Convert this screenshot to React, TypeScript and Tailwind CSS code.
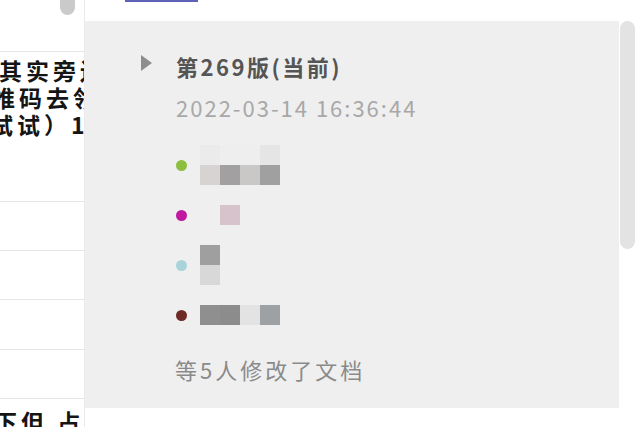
import React from 'react'

const FONT = { fontFamily: '"Noto Sans CJK SC", "Noto Sans", sans-serif' }

// pixelated (mosaic) editor names, 20px cells
const EDITORS: { dot: string; cells: string[][] }[] = [
  {
    dot: 'bg-[#8dbf3f]',
    cells: [
      ['bg-[#ebebeb]', 'bg-[#eeeeee]', 'bg-[#eeeeee]', 'bg-[#e5e5e5]'],
      ['bg-[#d7d3d3]', 'bg-[#a2a0a1]', 'bg-[#cac7c7]', 'bg-[#a0a0a0]'],
    ],
  },
  {
    dot: 'bg-[#c0189e]',
    cells: [['bg-[#efefef]', 'bg-[#d7c3cc]']],
  },
  {
    dot: 'bg-[#a9d3da]',
    cells: [['bg-[#9f9f9f]'], ['bg-[#d8d8d8]']],
  },
  {
    dot: 'bg-[#6e2b25]',
    cells: [['bg-[#8f8f8f]', 'bg-[#8c8c8c]', 'bg-[#e3e3e3]', 'bg-[#9ea1a4]']],
  },
]

function LeftPanel() {
  return (
    <div className="w-[85px] shrink-0 overflow-hidden bg-white border-r border-[#eaeaea]" style={FONT}>
      <div className="h-[52px] border-b border-[#e6e6e6]">
        <div className="ml-[60px] w-[15px] h-[15px] rounded-b-full bg-[#cacaca]" />
      </div>
      <div className="h-[150px] border-b border-[#e6e6e6] pt-[5px] text-[23px] leading-[27px] font-bold text-[#151515] tracking-[4px] whitespace-nowrap">
        <div className="ml-[-1px]">其实旁边</div>
        <div className="ml-[-8px]">推码去领取</div>
        <div className="ml-[-10px]">试试）1</div>
      </div>
      <div className="h-[49px] border-b border-[#e6e6e6]" />
      <div className="h-[49px] border-b border-[#e6e6e6]" />
      <div className="h-[50px] border-b border-[#e6e6e6]" />
      <div className="h-[49px] border-b border-[#e6e6e6]" />
      <div className="pt-[9px] text-[23px] leading-[27px] font-bold text-[#151515] tracking-[4px] whitespace-nowrap">
        <div className="ml-[-6px]">下但 占领</div>
      </div>
    </div>
  )
}

function EditorRow({ dot, cells }: { dot: string; cells: string[][] }) {
  return (
    <div className="flex items-center">
      <span className={`w-[11px] h-[11px] rounded-full ml-[91px] ${dot}`} />
      <div className="ml-[13px] flex flex-col">
        {cells.map((row, i) => (
          <div key={i} className="flex">
            {row.map((c, j) => (
              <span key={j} className={`w-[20px] h-[20px] ${c}`} />
            ))}
          </div>
        ))}
      </div>
    </div>
  )
}

function VersionCard() {
  return (
    <div className="w-[534px] h-[387px] bg-[#efefef] pt-[30px]" style={FONT}>
      <div className="flex items-start">
        <svg className="ml-[56px] mt-[4px]" width="12" height="16" viewBox="0 0 12 16">
          <polygon points="0,0 11,8 0,16" fill="#8d8d8d" />
        </svg>
        <div className="ml-[23px] text-[22px] leading-[30px] font-bold text-[#555555] tracking-[2.5px]">
          第269版(当前)
        </div>
      </div>
      <div className="ml-[91px] mt-[11px] text-[22px] leading-[30px] text-[#a8a8a8] tracking-[2px]">
        2022-03-14 16:36:44
      </div>

      <div className="mt-[23px] flex flex-col gap-[20px]">
        {EDITORS.map((e, i) => (
          <EditorRow key={i} dot={e.dot} cells={e.cells} />
        ))}
      </div>

      <div className="ml-[90px] mt-[29px] text-[22px] leading-[30px] text-[#8a8a8a] tracking-[3px]">
        等5人修改了文档
      </div>
    </div>
  )
}

export default function App() {
  return (
    <div className="flex w-[640px] h-[427px] bg-white overflow-hidden">
      <LeftPanel />
      <div className="flex-1 flex flex-col">
        <div className="h-[21px]">
          <div className="ml-[40px] w-[73px] h-[2px] bg-[#5d62b6]" />
        </div>
        <div className="flex">
          <VersionCard />
          <div className="w-[17px] pl-[1px]">
            <div className="w-[15px] h-[228px] rounded-full bg-[#e3e3e3]" />
          </div>
        </div>
      </div>
    </div>
  )
}
